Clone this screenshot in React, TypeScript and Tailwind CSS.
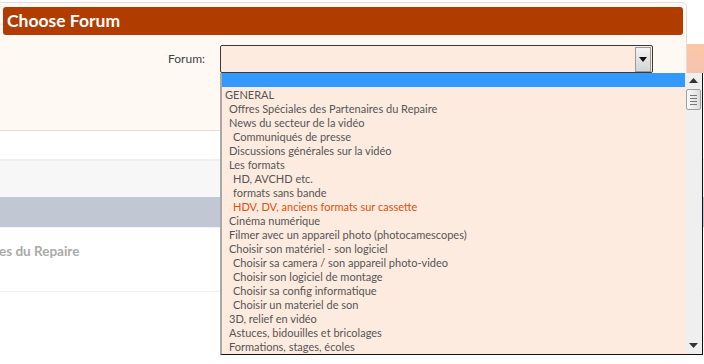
const items: { label: string; level: number; active?: boolean }[] = [
  { label: 'GENERAL', level: 0 },
  { label: 'Offres Spéciales des Partenaires du Repaire', level: 1 },
  { label: 'News du secteur de la vidéo', level: 1 },
  { label: 'Communiqués de presse', level: 2 },
  { label: 'Discussions générales sur la vidéo', level: 1 },
  { label: 'Les formats', level: 1 },
  { label: 'HD, AVCHD etc.', level: 2 },
  { label: 'formats sans bande', level: 2 },
  { label: 'HDV, DV, anciens formats sur cassette', level: 2, active: true },
  { label: 'Cinéma numérique', level: 1 },
  { label: 'Filmer avec un appareil photo (photocamescopes)', level: 1 },
  { label: 'Choisir son matériel - son logiciel', level: 1 },
  { label: 'Choisir sa camera / son appareil photo-video', level: 2 },
  { label: 'Choisir son logiciel de montage', level: 2 },
  { label: 'Choisir sa config informatique', level: 2 },
  { label: 'Choisir un materiel de son', level: 2 },
  { label: '3D, relief en vidéo', level: 1 },
  { label: 'Astuces, bidouilles et bricolages', level: 1 },
  { label: 'Formations, stages, écoles', level: 1 },
]

const indent = ['pl-[3px]', 'pl-[7px]', 'pl-[11px]']

function Arrow({ up }: { up?: boolean }) {
  return (
    <svg width="9" height="5" viewBox="0 0 9 5" className={up ? '' : 'rotate-180'}>
      <path d="M0 5 L4.5 0 L9 5 Z" fill="#333" />
    </svg>
  )
}

export default function App() {
  return (
    <div className="relative h-[364px] w-[704px] overflow-hidden bg-white font-['Lato','Open_Sans',sans-serif]">
      {/* peach strip behind the panel */}
      <div className="absolute left-[687px] top-[44px] h-[29px] w-[17px] bg-gradient-to-b from-[#fbc9a6] to-[#f5c2ad]" />

      <div className="flex flex-col">
        <div className="h-[2px]" />
        {/* panel */}
        <div className="relative w-[687px] rounded-r-[5px] border border-l-0 border-[#e3dedb] bg-[#fff8f3] pb-[57px]">
          <div className="ml-[3px] mt-[4px] flex h-[28px] w-[680px] items-center rounded-[3px] bg-[#b03c00] px-[4px]">
            <span className="text-[17.5px] font-bold leading-none text-white">Choose Forum</span>
          </div>
          <div className="mt-[10px] flex items-center">
            <span className="w-[205px] text-right text-[12px] text-[#444]">Forum:</span>
            <div className="ml-[15px] flex h-[28px] w-[433px] items-center justify-end rounded-[2px] border border-[#3a3a3a] bg-[#feebdf] pr-[1px]">
              <div className="flex h-[25px] w-[16px] items-center justify-center border border-[#9a9a9a] bg-gradient-to-b from-[#f4f4f4] to-[#d4d4d4]">
                <svg width="8" height="5" viewBox="0 0 8 5">
                  <path d="M0 0 L8 0 L4 5 Z" fill="#111" />
                </svg>
              </div>
            </div>
          </div>
        </div>
        <div className="h-[29px] border-b border-[#eeeeee] bg-white" />
        <div className="h-[37px] border-t border-[#f0f0f0] bg-[#f7f7f7]" />
        <div className="h-[30px] bg-[#c1c8d3]" />
        <div className="flex h-[65px] items-start border-t border-[#f2f2f2] border-b bg-white pt-[13px]">
          <span className="-ml-[1px] text-[13.5px] font-bold text-[#aaaaaa]">es du Repaire</span>
        </div>
      </div>

      {/* opened dropdown list */}
      <div className="absolute left-[220px] top-[73px] flex h-[282px] w-[483px] border-l-2 border-r border-b border-l-[#a8a8a8] border-r-[#111] border-b-[#111] bg-[#feebdf]">
        <div className="flex flex-1 flex-col">
          <div className="h-[14px] bg-[#3399ff]" />
          {items.map((it) => (
            <div
              key={it.label}
              className={`h-[14px] whitespace-nowrap pt-[1px] text-[11px] leading-[14px] ${indent[it.level]} ${it.active ? 'text-[#e2500c]' : 'text-[#555555]'}`}
            >
              {it.label}
            </div>
          ))}
        </div>
        <div className="flex w-[17px] flex-col items-center bg-[#efefef] pt-[5px] pb-[6px]">
          <Arrow up />
          <div className="mt-[6px] flex h-[21px] w-[15px] flex-col items-center justify-center gap-[2px] rounded-[2px] border border-[#a0a0a0] bg-gradient-to-r from-[#fafafa] to-[#dcdcdc]">
            <div className="h-px w-[7px] bg-[#777]" />
            <div className="h-px w-[7px] bg-[#777]" />
            <div className="h-px w-[7px] bg-[#777]" />
            <div className="h-px w-[7px] bg-[#777]" />
          </div>
          <div className="flex-1" />
          <Arrow />
        </div>
      </div>
    </div>
  )
}
